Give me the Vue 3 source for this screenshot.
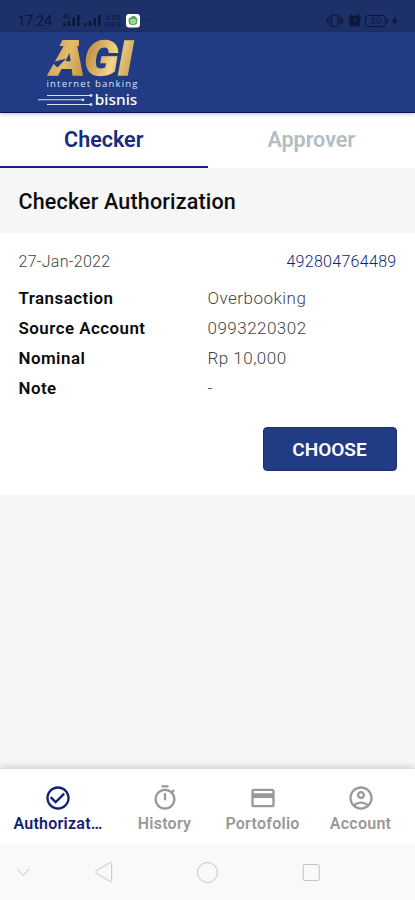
<script setup>
const tabs = [
  { label: 'Checker', active: true },
  { label: 'Approver', active: false },
]
const rows = [
  { label: 'Transaction', value: 'Overbooking' },
  { label: 'Source Account', value: '0993220302' },
  { label: 'Nominal', value: 'Rp 10,000' },
  { label: 'Note', value: '-' },
]
const navItems = [
  {
    label: 'Authorizat…',
    active: true,
    icon: 'M16.59 7.58 10 14.17l-3.59-3.58L5 12l5 5 8-8zM12 2C6.48 2 2 6.48 2 12s4.48 10 10 10 10-4.48 10-10S17.52 2 12 2zm0 18c-4.42 0-8-3.58-8-8s3.58-8 8-8 8 3.58 8 8-3.58 8-8 8z',
  },
  {
    label: 'History',
    icon: 'M15 1H9v2h6V1zm-4 13h2V8h-2v6zm8.03-6.61 1.42-1.42c-.43-.51-.9-.99-1.41-1.41l-1.42 1.42C16.07 4.74 14.12 4 12 4c-4.97 0-9 4.03-9 9s4.02 9 9 9 9-4.03 9-9c0-2.12-.74-4.07-1.97-5.61zM12 20c-3.87 0-7-3.13-7-7s3.13-7 7-7 7 3.13 7 7-3.13 7-7 7z',
  },
  {
    label: 'Portofolio',
    icon: 'M20 4H4c-1.11 0-1.99.89-1.99 2L2 18c0 1.11.89 2 2 2h16c1.11 0 2-.89 2-2V6c0-1.11-.89-2-2-2zm0 14H4v-6h16v6zm0-10H4V6h16v2z',
  },
  {
    label: 'Account',
    icon: 'M12 2C6.48 2 2 6.48 2 12s4.48 10 10 10 10-4.48 10-10S17.52 2 12 2zM7.35 18.5C8.66 17.56 10.26 17 12 17s3.34.56 4.65 1.5C15.34 19.44 13.74 20 12 20s-3.34-.56-4.65-1.5zm10.79-1.38C16.45 15.8 14.32 15 12 15s-4.45.8-6.14 2.12C4.7 15.73 4 13.95 4 12c0-4.42 3.58-8 8-8s8 3.58 8 8c0 1.95-.7 3.73-1.86 5.12zM12 6c-1.93 0-3.5 1.57-3.5 3.5S10.07 13 12 13s3.5-1.57 3.5-3.5S13.93 6 12 6zm0 5c-.83 0-1.5-.67-1.5-1.5S11.17 8 12 8s1.5.67 1.5 1.5S12.83 11 12 11z',
  },
]
</script>

<template>
  <div class="screen">
    <div class="status">
      <svg width="415" height="32" viewBox="0 0 415 32">
        <g fill="#0c1738" font-family="Roboto, sans-serif">
          <text x="17.5" y="26" font-size="14" textLength="34.5">17:24</text>
          <text x="62.5" y="18.5" font-size="6.5" font-weight="500" textLength="8">4G</text>
          <path d="M63 23h2.6v3H63zM67.5 21h2.6v5h-2.6zM72.3 17.5h2.6V26h-2.6zM77 15h2.6v11H77zM84 23h2.6v3H84zM88.8 21h2.6v5h-2.6zM93.5 18h2.6v8h-2.6zM98 15h2.6v11H98z" />
          <text x="105" y="20" font-size="7.5" textLength="15.5">3.00</text>
          <text x="105" y="26.5" font-size="6.5" textLength="15.5" lengthAdjust="spacingAndGlyphs">KB/S</text>
          <circle cx="145.8" cy="20.5" r=".8" /><circle cx="149.8" cy="20.5" r=".8" /><circle cx="153.8" cy="20.5" r=".8" />
        </g>
        <rect x="126" y="14" width="14" height="13.5" rx="3" fill="#fff" />
        <path d="M129 18.7q4-1.5 8 0l-.6 5q-3.4 2.3-7 0zM130.5 18l1.6-1.6h2.8l1.2 1.6" fill="#7bbd62" stroke="#3c9140" stroke-width=".8" />
        <path d="M130.8 20.3h4.8M131 22.3l2 .9 2.5-1.3" fill="none" stroke="#e7f5df" stroke-width="1" />
        <g fill="none" stroke="#0c1738" stroke-width="1.2">
          <rect x="331.5" y="15" width="6.5" height="11.5" rx=".8" />
          <path d="M329.6 17q-1.6 3.7 0 7.4M340 17q1.6 3.7 0 7.4M327.4 18.5q-.7 2.2 0 4.5M342.2 18.5q.7 2.2 0 4.5" />
          <path d="M348.8 17.7l3.2-3M357.5 14.7l3.2 3M350.9 25l-1.2 1.6M358.6 25l1.2 1.6" stroke-width="1.6" />
          <rect x="365.5" y="15.5" width="20" height="11" rx="2.5" stroke-width="1" />
          <path d="M387.2 19v4" />
        </g>
        <circle cx="354.7" cy="21" r="5.6" fill="#0c1738" />
        <path d="M354.6 18v3.3h2.8" fill="none" stroke="#1d3068" stroke-width="1.1" />
        <text x="370.5" y="24.3" font-size="9" textLength="10.5" font-family="Roboto, sans-serif" fill="#0c1738">30</text>
        <path d="M395.8 15.8l-4.3 6h2.6l-1 4.5 4.7-6.1h-2.7z" fill="#0c1738" />
      </svg>
    </div>

    <header class="header">
      <svg class="logo" width="108" height="78" viewBox="34 32 108 78">
        <defs>
          <linearGradient id="gold" gradientUnits="userSpaceOnUse" x1="48" y1="40" x2="140" y2="70">
            <stop offset="0" stop-color="#cda054" />
            <stop offset="0.25" stop-color="#e3bc6c" />
            <stop offset="0.45" stop-color="#c4964b" />
            <stop offset="0.7" stop-color="#f2d58b" />
            <stop offset="1" stop-color="#bd9045" />
          </linearGradient>
        </defs>
        <g
          font-size="48" font-weight="900" font-style="italic" font-family="Roboto, sans-serif"
          fill="url(#gold)" stroke="url(#gold)" stroke-width="1.4"
        >
          <text x="51" y="75" textLength="82" lengthAdjust="spacingAndGlyphs">AGI</text>
        </g>
        <path d="M62.5 40H79v6H59.5z" fill="url(#gold)" />
        <path d="M52 62.5l14-4-8.5 9z" fill="#213b84" />
        <g fill="#dce3f4">
          <text x="46.5" y="87" font-size="9.5" textLength="91" font-family="Open Sans, sans-serif">internet banking</text>
          <text x="94.8" y="104.8" font-size="14.5" textLength="42.5" lengthAdjust="spacingAndGlyphs" font-weight="500" font-family="Noto Sans, sans-serif" fill="#fff">bisnis</text>
          <path d="M47 95h44v1H47zM38 99.3h45v1H38zM47 104h44v1H47z" />
          <circle cx="91" cy="95.5" r="1.4" /><circle cx="83" cy="99.8" r="1.4" /><circle cx="91" cy="104.5" r="1.4" />
        </g>
      </svg>
    </header>

    <div class="tabs">
      <div v-for="t in tabs" :key="t.label" class="tab" :class="{ active: t.active }">{{ t.label }}</div>
    </div>

    <h1 class="title">Checker Authorization</h1>

    <section class="card">
      <div class="meta">
        <span class="date">27-Jan-2022</span>
        <span class="ref">492804764489</span>
      </div>
      <dl class="rows">
        <div v-for="r in rows" :key="r.label" class="row">
          <dt>{{ r.label }}</dt>
          <dd>{{ r.value }}</dd>
        </div>
      </dl>
      <button class="choose">CHOOSE</button>
    </section>

    <div class="spacer"></div>

    <nav class="nav">
      <div v-for="n in navItems" :key="n.label" class="item" :class="{ active: n.active }">
        <svg width="28" height="28" viewBox="0 0 24 24"><path :d="n.icon" fill="currentColor" /></svg>
        <span>{{ n.label }}</span>
      </div>
    </nav>

    <div class="system">
      <svg width="415" height="56" viewBox="0 844 415 56" fill="none" stroke="#c4c4c4" stroke-width="1">
        <path d="M17 869l6 6.5 6-6.5" />
        <path d="M110.3 862.5q1.4-.6 1.4 1v17q0 1.6-1.4 1l-14-8.3q-1.8-1.2 0-2.4z" />
        <circle cx="207.5" cy="872.5" r="10" />
        <rect x="303.3" y="864.5" width="16" height="16" rx="1.5" />
      </svg>
    </div>
  </div>
</template>

<style>
body {
  background: #f6f6f6;
}
</style>

<style scoped>
.screen {
  display: flex;
  flex-direction: column;
  width: 415px;
  height: 900px;
  overflow: hidden;
  background: #f6f6f6;
  font-family: Roboto, sans-serif;
  box-sizing: border-box;
}
.screen svg {
  display: block;
}
.screen .logo {
  overflow: visible;
}
.status {
  height: 32px;
  background: #1d3068;
}
.header {
  height: 81px;
  box-sizing: border-box;
  padding-left: 34px;
  background: #213b84;
  border-bottom: 1px solid #0b1159;
  box-shadow: 0 1px 4px rgba(20, 30, 110, 0.3);
  position: relative;
}
.tabs {
  display: flex;
  height: 55px;
  background: #fff;
}
.tab {
  flex: 1;
  box-sizing: border-box;
  text-align: center;
  font-size: 21.5px;
  line-height: 53px;
  font-weight: 600;
  color: #b0bec5;
}
.tab.active {
  color: #182b7c;
  border-bottom: 2px solid #182478;
}
.title {
  margin: 0;
  height: 65px;
  padding-left: 18.5px;
  font-size: 21.5px;
  line-height: 67px;
  font-weight: 500;
  letter-spacing: 0.17px;
  color: #0c0c0c;
}
.card {
  display: flex;
  flex-direction: column;
  height: 262px;
  box-sizing: border-box;
  padding: 18px 18.5px 0 18.5px;
  background: #fff;
}
.meta {
  display: flex;
  justify-content: space-between;
  font-size: 16px;
  line-height: 21px;
  font-weight: 300;
  letter-spacing: 0.3px;
}
.date {
  color: #444;
}
.ref {
  color: #0f1f78;
  font-weight: 350;
  letter-spacing: 0.3px;
}
.rows {
  margin: 11px 0 0;
}
.row {
  display: grid;
  grid-template-columns: 189px 1fr;
  line-height: 30px;
  font-size: 17px;
  letter-spacing: 0.48px;
}
.row dt {
  font-weight: 600;
  font-size: 16.9px;
  color: #0a0a0a;
}
.row dd {
  margin: 0;
  color: #444;
  font-weight: 300;
}
.choose {
  align-self: flex-end;
  width: 134px;
  height: 44px;
  margin-top: 24px;
  padding: 1px 0 0;
  border: 1px solid #1a3079;
  border-radius: 4px;
  background: #213b84;
  color: #fff;
  font: 600 19px Roboto, sans-serif;
}
.spacer {
  flex: 1;
}
.nav {
  display: grid;
  grid-template-columns: 115px 98px 98px 98px;
  height: 75px;
  box-sizing: border-box;
  padding: 15px 0 0 0.5px;
  background: #fff;
  box-shadow: 0 -1px 8px rgba(0, 0, 0, 0.2);
}
.item {
  display: flex;
  flex-direction: column;
  align-items: center;
  color: #999;
  font-size: 16px;
  line-height: 23px;
  font-weight: 600;
  letter-spacing: 0.25px;
}
.item.active {
  color: #121f78;
}
.system {
  height: 56px;
  background: #f9f9f9;
  position: relative;
}
</style>
